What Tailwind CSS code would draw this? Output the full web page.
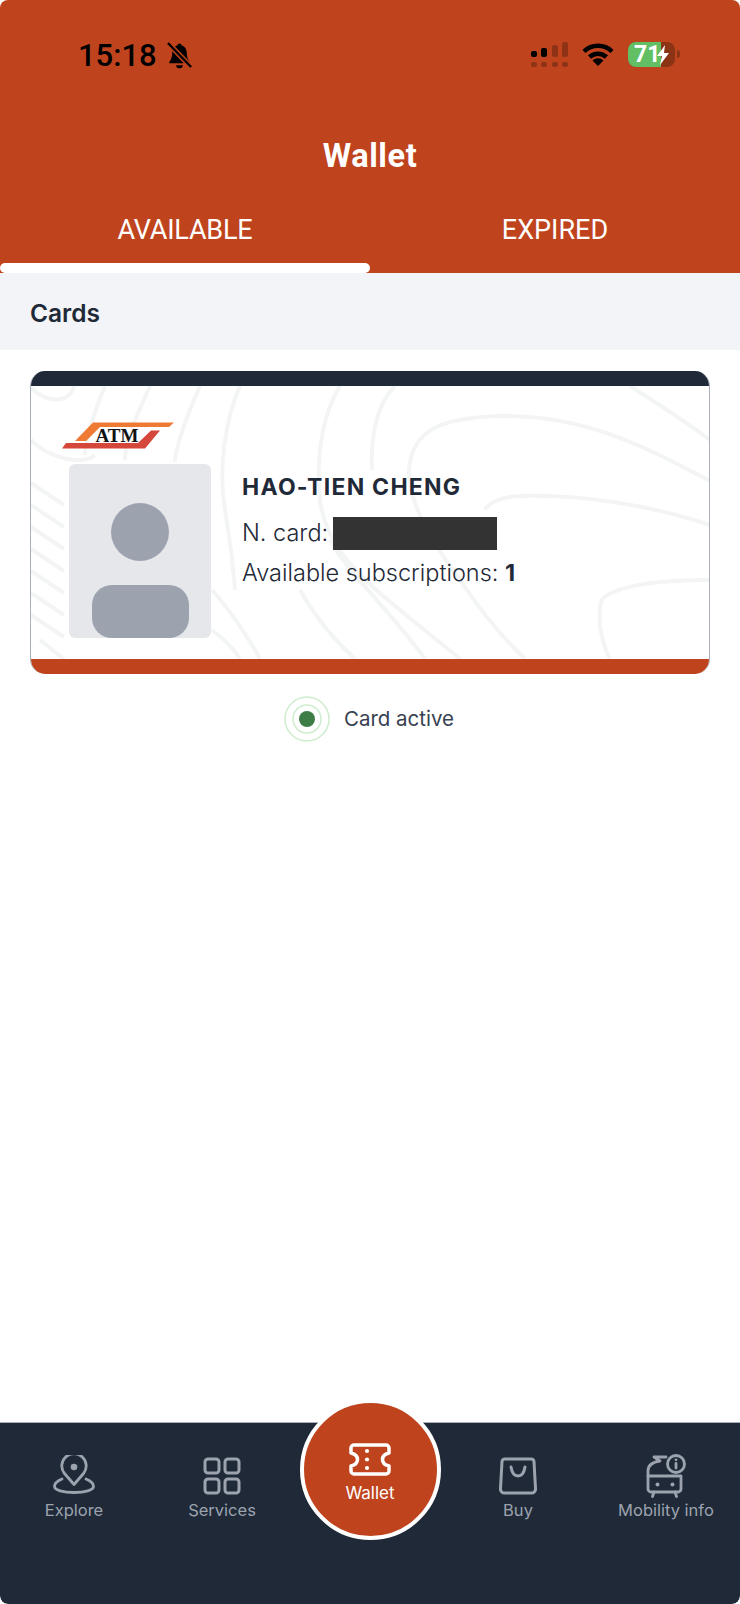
<!DOCTYPE html>
<html lang="en">
<head>
    <meta charset="UTF-8">
    <meta name="viewport" content="width=device-width, initial-scale=1.0">
    <title>Wallet</title>
    <script src="https://cdn.jsdelivr.net/npm/@tailwindcss/browser@4"></script>
</head>
<body class="bg-white font-['Inter',sans-serif]">
    <div class="relative w-[740px] h-[1604px] flex flex-col overflow-hidden rounded-[8px] bg-white">
        <!-- Header -->
        <header class="h-[273px] bg-[#bf441e] flex flex-col shrink-0">
            <div class="h-[138px] pt-[42px] pl-[78px] pr-[60px] flex items-start justify-between">
                <div class="flex items-center">
                    <span class="font-['Roboto',sans-serif] font-medium text-[31px] leading-[26px] text-black">15:18</span>
                    <svg class="w-[27px] h-[27px] ml-[9px]" viewBox="0 0 28 28" fill="#000">
                        <path d="M14 1.500c-1.200 0-2 .8-2 1.800-3.600 1-5.500 4-5.500 7.700 0 4-1 7.500-3 9.500v1.500h21v-1.500c-2-2-3-5.500-3-9.500 0-3.700-1.900-6.700-5.500-7.700 0-1-.8-1.800-2-1.800z"/>
                        <path d="M10.500 24a3.500 3.200 0 0 0 7 0z"/>
                        <path d="M2 1l24 25" stroke="#bf441e" stroke-width="5.500"/>
                        <path d="M2 1l24 25" stroke="#000" stroke-width="2.400"/>
                    </svg>
                </div>
                <div class="flex items-start">
                    <svg class="w-[37px] h-[25px]" viewBox="0 0 37 25">
                        <rect x="0" y="9" width="6" height="6" rx="2" fill="#000"/>
                        <rect x="10" y="6" width="6" height="9" rx="2" fill="#000"/>
                        <rect x="21" y="3" width="6" height="12" rx="2" fill="#8f3316"/>
                        <rect x="31" y="0" width="6" height="15" rx="2" fill="#8f3316"/>
                        <rect x="0" y="20" width="6" height="5" rx="2" fill="#8f3316"/>
                        <rect x="10" y="20" width="6" height="5" rx="2" fill="#8f3316"/>
                        <rect x="21" y="20" width="6" height="5" rx="2" fill="#8f3316"/>
                        <rect x="31" y="20" width="6" height="5" rx="2" fill="#8f3316"/>
                    </svg>
                    <svg class="w-[32px] h-[24px] ml-[14px]" viewBox="0 0 32 24" fill="none" stroke="#000" stroke-width="4.500">
                        <path d="M2 9.500a20 20 0 0 1 28 0"/>
                        <path d="M7.500 15a12.500 12.500 0 0 1 17 0"/>
                        <path d="M16 24l-5.500-5.500a8 8 0 0 1 11 0z" fill="#000" stroke="none"/>
                    </svg>
                    <div class="relative ml-[14px] w-[47px] h-[25px] rounded-[8px] overflow-hidden bg-[#8a3415] flex">
                        <div class="w-[33px] h-full bg-[#62bf63]"></div>
                        <span class="absolute left-[6px] top-0 font-['Roboto',sans-serif] font-bold text-[23px] leading-[25px] text-white">71</span>
                        <svg class="absolute left-[29px] top-[3px] w-[13px] h-[20px]" viewBox="0 0 13 20" fill="#fff"><path d="M8 0L0 11h5l-2 9 9-12H7z"/></svg>
                    </div>
                    <div class="w-[3px] h-[8px] mt-[8px] ml-[2px] bg-[#8a3415] rounded-r-full"></div>
                </div>
            </div>
            <h1 class="text-center font-['Roboto',sans-serif] font-bold text-[32.500px] leading-[36px] tracking-[0.6px] text-white">Wallet</h1>
            <div class="flex flex-1 mt-[40px]">
                <div class="w-1/2 flex flex-col justify-between items-center">
                    <span class="font-['Roboto',sans-serif] text-[27px] leading-[32px] text-white tracking-[-0.2px]">AVAILABLE</span>
                    <div class="w-full h-[10px] bg-white rounded-[5px]"></div>
                </div>
                <div class="w-1/2 flex flex-col items-center">
                    <span class="font-['Roboto',sans-serif] text-[27px] leading-[32px] text-white">EXPIRED</span>
                </div>
            </div>
        </header>

        <!-- Section title -->
        <div class="h-[77px] bg-[#f2f4f8] flex items-center pl-[30px] pt-[4px] shrink-0">
            <h2 class="font-semibold text-[24.500px] text-[#1f2937]">Cards</h2>
        </div>

        <!-- Card -->
        <div class="mx-[30px] mt-[21px] h-[303px] rounded-[15px] overflow-hidden border-x border-[#a9afbd] flex flex-col shrink-0">
            <div class="h-[15px] bg-[#1f2937] -mx-px shrink-0"></div>
            <div class="relative flex-1 flex bg-white">
                <!-- contour lines -->
                <svg class="absolute inset-0 w-full h-full" viewBox="31 386 678 273" fill="none" stroke="#f3f5f4" stroke-width="4">
                    <path d="M710 481C650 450 590 415 500 416C440 418 412 430 409 470C408 500 430 540 460 580C480 610 505 640 525 659"/>
                    <path d="M710 525C650 505 580 494 520 496C500 497 488 503 485 510"/>
                    <path d="M710 580C660 580 620 585 603 598C596 610 600 640 610 659"/>
                    <path d="M630 386C660 405 690 425 710 440"/>
                    <path d="M395 386C380 400 370 430 372 470"/>
                    <path d="M340 386C325 410 315 450 320 500C325 540 350 570 400 610C430 635 450 650 460 659"/>
                    <path d="M330 540C345 570 390 610 425 659"/>
                    <path d="M300 590C320 625 340 645 355 659"/>
                    <path d="M240 386C225 420 218 470 225 510C228 530 232 550 235 590"/>
                    <path d="M200 386C185 420 175 450 175 462"/>
                    <path d="M150 386C135 420 125 440 125 460"/>
                    <path d="M105 386C95 410 85 440 85 455"/>
                    <path d="M31 388C50 405 70 402 74 386"/>
                    <path d="M31 440C50 460 85 465 95 455"/>
                    <path d="M31 483L64 505"/><path d="M31 505L64 527"/><path d="M31 527L64 549"/><path d="M31 549L64 571"/><path d="M31 571L64 593"/><path d="M31 593L64 615"/><path d="M31 615L64 637"/><path d="M40 640L64 659"/>
                    <path d="M212 590C230 610 250 640 260 659"/>
                    <path d="M212 630C225 640 235 650 240 659"/>
                </svg>
                <div class="relative pl-[38px] flex flex-col shrink-0">
                    <svg class="w-[140px] h-[50px] mt-[24px] -ml-[19px]" viewBox="0 0 140 50">
                        <polygon points="124,12.500 43,12.500 25,31 36,31 50,17 119,17" fill="#ef7a33"/>
                        <polygon points="110,20.500 95,38.500 12,38.500 16,33 88,33 101,20.500" fill="#d5473a"/>
                        <text x="67" y="32" text-anchor="middle" font-family="Liberation Serif" font-weight="700" font-size="19" fill="#111">ATM</text>
                    </svg>
                    <div class="mt-[4px] w-[142px] h-[174px] bg-[#e5e7eb] rounded-[6px] flex flex-col items-center overflow-hidden">
                        <div class="mt-[39px] w-[58px] h-[58px] rounded-full bg-[#9ca3af]"></div>
                        <div class="mt-[24px] w-[97px] h-[53px] rounded-[20px] bg-[#9ca3af]"></div>
                    </div>
                </div>
                <div class="relative ml-[31px] mt-[85px] text-[#1f2937]">
                    <p class="font-bold text-[23px] leading-[32px] tracking-[1.25px]">HAO-TIEN CHENG</p>
                    <div class="flex items-center mt-[9px] h-[42px]">
                        <span class="text-[23.500px] font-light">N. card:</span>
                        <div class="ml-[5px] w-[164px] h-[33px] bg-[#333333]"></div>
                    </div>
                    <p class="text-[23.500px] font-light leading-[32px] mt-[3px] whitespace-nowrap">Available subscriptions: <span class="font-bold">1</span></p>
                </div>
            </div>
            <div class="h-[15px] bg-[#bf441e] -mx-px shrink-0"></div>
        </div>

        <!-- Status -->
        <div class="flex items-center justify-center mt-[22px] gap-[14px] pr-[2px]">
            <svg class="w-[46px] h-[46px]" viewBox="0 0 46 46" fill="none">
                <circle cx="23" cy="23" r="22" stroke="#cfeccf" stroke-width="1.500"/>
                <circle cx="23" cy="23" r="14" stroke="#cfeccf" stroke-width="1.500"/>
                <circle cx="23" cy="23" r="8" fill="#3f7d46"/>
            </svg>
            <span class="text-[20.500px] text-[#374151]">Card active</span>
        </div>

        <!-- Bottom nav -->
        <nav class="absolute left-0 right-0 bottom-0 h-[182px] bg-[#1f2937] border-t border-[#a9afbd] grid grid-cols-5 rounded-b-[8px]">
            <a class="flex flex-col items-center pt-[32px] text-[#9ca3af] text-[16.500px] leading-[20px]">
                <svg class="w-[42px] h-[42px]" viewBox="0 0 42 42" fill="none" stroke="currentColor" stroke-width="2.800" stroke-linecap="round" stroke-linejoin="round">
                    <path d="M21 29.500l-9.500-11a12.200 12.200 0 1 1 19 0z"/>
                    <circle cx="21" cy="12" r="3.300" fill="currentColor" stroke="none"/>
                    <path d="M9 24C4 26 1.500 29 1.500 31.500c0 3.500 8.500 6 19.500 6s19.500-2.500 19.500-6c0-2.500-2.500-5.500-7.500-7.500"/>
                </svg>
                <span class="mt-[3px]">Explore</span>
            </a>
            <a class="flex flex-col items-center pt-[34px] text-[#9ca3af] text-[16.500px] leading-[20px]">
                <svg class="w-[38px] h-[38px]" viewBox="0 0 38 38" fill="none" stroke="currentColor" stroke-width="3" stroke-linejoin="round">
                    <rect x="2" y="2" width="14" height="14" rx="3"/>
                    <rect x="22" y="2" width="14" height="14" rx="3"/>
                    <rect x="2" y="22" width="14" height="14" rx="3"/>
                    <rect x="22" y="22" width="14" height="14" rx="3"/>
                </svg>
                <span class="mt-[5px]">Services</span>
            </a>
            <div></div>
            <a class="flex flex-col items-center pt-[34px] text-[#9ca3af] text-[16.500px] leading-[20px]">
                <svg class="w-[38px] h-[38px]" viewBox="0 0 38 38" fill="none" stroke="currentColor" stroke-width="3" stroke-linecap="round" stroke-linejoin="round">
                    <path d="M6 2h26a3 3 0 0 1 3 2.500l1.500 27a4 4 0 0 1-4 4.500H5.500a4 4 0 0 1-4-4.500L3 4.500A3 3 0 0 1 6 2z"/>
                    <path d="M12 10c1 6 4 9 7 9s6-3 7-9"/>
                </svg>
                <span class="mt-[5px]">Buy</span>
            </a>
            <a class="flex flex-col items-center pt-[31px] text-[#9ca3af] text-[16.500px] leading-[20px]">
                <svg class="w-[42px] h-[44px]" viewBox="0 0 42 44" fill="none" stroke="currentColor" stroke-width="2.800" stroke-linecap="round" stroke-linejoin="round">
                    <circle cx="31" cy="10" r="8.500"/>
                    <path d="M31 9.500v4.500" />
                    <circle cx="31" cy="5.800" r="1.400" fill="currentColor" stroke="none"/>
                    <path d="M21 3H9l6 4C8 8 3 11 3 17v5"/>
                    <path d="M3 22h33v13a3 3 0 0 1-3 3H6a3 3 0 0 1-3-3z"/>
                    <circle cx="12.500" cy="30.500" r="2" fill="currentColor" stroke="none"/>
                    <circle cx="27.500" cy="30.500" r="2" fill="currentColor" stroke="none"/>
                    <path d="M9 38l-1.500 4.500M30 38l1.500 4.500"/>
                </svg>
                <span class="mt-[2px] whitespace-nowrap">Mobility info</span>
            </a>
        </nav>

        <!-- Centre wallet button -->
        <div class="absolute left-[299.500px] top-[1399px] w-[141px] h-[141px] rounded-full border-[4px] border-white bg-[#bf441e] flex flex-col items-center text-white">
            <svg class="w-[42px] h-[33px] mt-[40px] -ml-[1px]" viewBox="0 0 42 33" fill="none" stroke="#fff" stroke-width="3.500" stroke-linejoin="round">
                <path d="M5 2h32a3 3 0 0 1 3 3v5c-4 1-6.500 3.500-6.500 6.500s2.500 5.500 6.500 6.500v5a3 3 0 0 1-3 3H5a3 3 0 0 1-3-3v-5c4-1 6.500-3.500 6.500-6.500S6 11 2 10V5a3 3 0 0 1 3-3z"/>
                <circle cx="18" cy="8" r="2.100" fill="#fff" stroke="none"/>
                <circle cx="18" cy="16.500" r="2.100" fill="#fff" stroke="none"/>
                <circle cx="18" cy="25" r="2.100" fill="#fff" stroke="none"/>
            </svg>
            <span class="text-[17px] leading-[20px] mt-[7px]">Wallet</span>
        </div>
    </div>
</body>
</html>
